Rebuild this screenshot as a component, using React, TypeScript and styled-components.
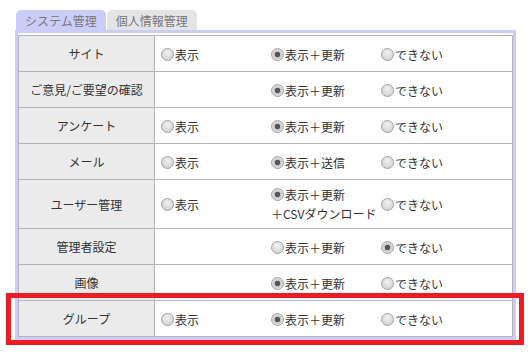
import styled, { createGlobalStyle } from "styled-components";

const GlobalStyle = createGlobalStyle`
  html, body {
    margin: 0;
    background: #fff;
    font-family: "Noto Sans CJK JP", "Noto Sans", sans-serif;
    color: #333;
  }
`;

const Page = styled.div`
  position: relative;
  height: 355px;
  padding: 10px 0 0 15px;
  box-sizing: border-box;
`;

const Tabs = styled.div`
  display: flex;
  gap: 1px;
  margin-left: 1px;
`;

const Tab = styled.div<{ $active?: boolean }>`
  height: 20px;
  padding: 0 9px;
  font-size: 12px;
  line-height: 21px;
  color: #777;
  background: ${(p) => (p.$active ? "#ccccf8" : "#e4e4e4")};
  border-radius: 5px 5px 0 0;
`;

const Panel = styled.div`
  width: 501px;
  box-sizing: border-box;
  border: 3px solid #ccccf8;
  padding-top: 2px;
`;

const Table = styled.table`
  width: 100%;
  border-collapse: collapse;
  font-size: 12px;
  line-height: 19px;

  td {
    border: 1px solid #b4b4b4;
    height: 25px;
    padding: 5px 6px;
    vertical-align: middle;
  }
`;

const LabelCell = styled.td`
  width: 123px;
  background: #ebebeb;
  text-align: center;
`;

const OptionCell = styled.td`
  white-space: nowrap;
`;

const Option = styled.span`
  display: inline-block;
  width: 110px;
  vertical-align: middle;
  white-space: nowrap;
`;

const Radio = styled.span<{ $checked?: boolean }>`
  display: inline-block;
  width: 11px;
  height: 11px;
  margin-right: 1px;
  border: 1px solid #a4a4a4;
  border-radius: 50%;
  vertical-align: -1px;
  background: ${(p) =>
    p.$checked
      ? "radial-gradient(circle, #555 0 2.5px, #c4c4c4 3px, #e4e4e4 6px)"
      : "radial-gradient(circle at 50% 35%, #f2f2f2, #cacaca)"};
`;

const Marker = styled.div`
  position: absolute;
  left: 6px;
  top: 293px;
  width: 518px;
  height: 52px;
  box-sizing: border-box;
  border: 5px solid #ed1c24;
  pointer-events: none;
`;

type Row = {
  label: string;
  options: (string | null)[];
  checked: number;
};

const rows: Row[] = [
  { label: "サイト", options: ["表示", "表示＋更新", "できない"], checked: 1 },
  { label: "ご意見/ご要望の確認", options: [null, "表示＋更新", "できない"], checked: 1 },
  { label: "アンケート", options: ["表示", "表示＋更新", "できない"], checked: 1 },
  { label: "メール", options: ["表示", "表示＋送信", "できない"], checked: 1 },
  {
    label: "ユーザー管理",
    options: ["表示", "表示＋更新\n＋CSVダウンロード", "できない"],
    checked: 1,
  },
  { label: "管理者設定", options: [null, "表示＋更新", "できない"], checked: 2 },
  { label: "画像", options: [null, "表示＋更新", "できない"], checked: 1 },
  { label: "グループ", options: ["表示", "表示＋更新", "できない"], checked: 1 },
];

function App() {
  return (
    <Page>
      <GlobalStyle />
      <Tabs>
        <Tab $active>システム管理</Tab>
        <Tab>個人情報管理</Tab>
      </Tabs>
      <Panel>
        <Table>
          <tbody>
            {rows.map((row) => (
              <tr key={row.label}>
                <LabelCell>{row.label}</LabelCell>
                <OptionCell>
                  {row.options.map((opt, i) => (
                    <Option key={i}>
                      {opt && (
                        <>
                          <Radio $checked={i === row.checked} />
                          {opt.split("\n").map((line, j) => (
                            <span key={j}>
                              {j > 0 && <br />}
                              {line}
                            </span>
                          ))}
                        </>
                      )}
                    </Option>
                  ))}
                </OptionCell>
              </tr>
            ))}
          </tbody>
        </Table>
      </Panel>
      <Marker />
    </Page>
  );
}

export default App;
